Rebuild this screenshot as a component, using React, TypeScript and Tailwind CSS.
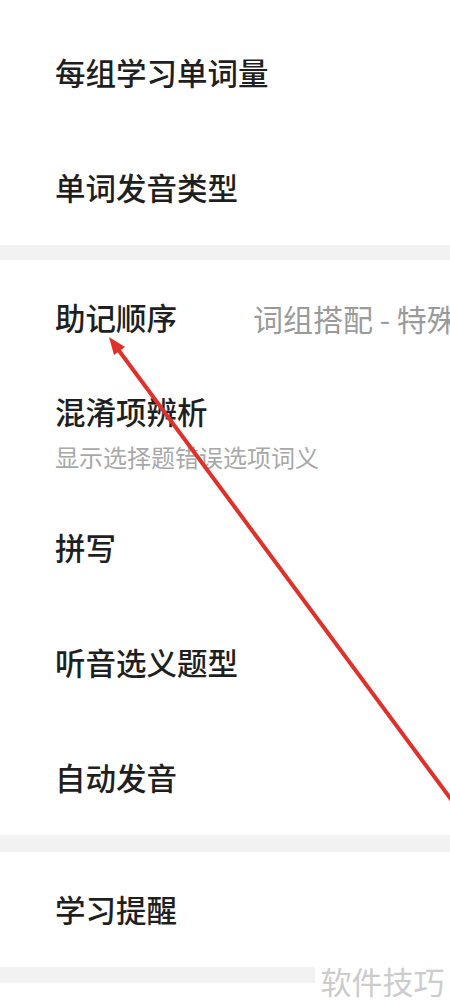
import React from "react";

const font = { fontFamily: '"Noto Sans CJK SC", "Noto Sans", sans-serif' };

function Row({ title, sub, value }: { title: string; sub?: string; value?: string }) {
  return (
    <div className="h-[115px] flex items-center pl-[55px] bg-white">
      <div className="flex flex-col">
        <span className="text-[30.5px] leading-none font-medium text-[#1f1f1f] whitespace-nowrap">{title}</span>
        {sub && (
          <span className="mt-[18px] text-[24px] leading-none text-[#a8a8a8] whitespace-nowrap">{sub}</span>
        )}
      </div>
      {value && (
        <span className="ml-[76px] text-[30px] leading-none text-[#9a9a9a] whitespace-nowrap">{value}</span>
      )}
    </div>
  );
}

export default function App() {
  return (
    <div className="relative w-[450px] h-[1003px] overflow-hidden bg-white" style={font}>
      <div className="h-[15px] bg-white" />
      <Row title="每组学习单词量" />
      <Row title="单词发音类型" />
      <div className="h-[15px] bg-[#f2f2f2]" />
      <Row title="助记顺序" value="词组搭配 - 特殊用法" />
      <Row title="混淆项辨析" sub="显示选择题错误选项词义" />
      <Row title="拼写" />
      <Row title="听音选义题型" />
      <Row title="自动发音" />
      <div className="h-[17px] bg-[#f2f2f2]" />
      <Row title="学习提醒" />
      <div className="h-[16px] bg-[#f2f2f2]" />

      {/* 水印 */}
      <div className="absolute right-0 bottom-0 w-[135px] h-[46px] bg-white flex items-center justify-center">
        <span className="text-[31px] leading-none text-[#cccccc]">软件技巧</span>
      </div>

      {/* 红色箭头 */}
      <svg className="absolute left-0 top-0 pointer-events-none" width="450" height="1003">
        <line x1="117" y1="348" x2="453" y2="802" stroke="#e0302a" strokeWidth="4" />
        <polygon points="109,337 125,347 114,355" fill="#e0302a" />
      </svg>
    </div>
  );
}
